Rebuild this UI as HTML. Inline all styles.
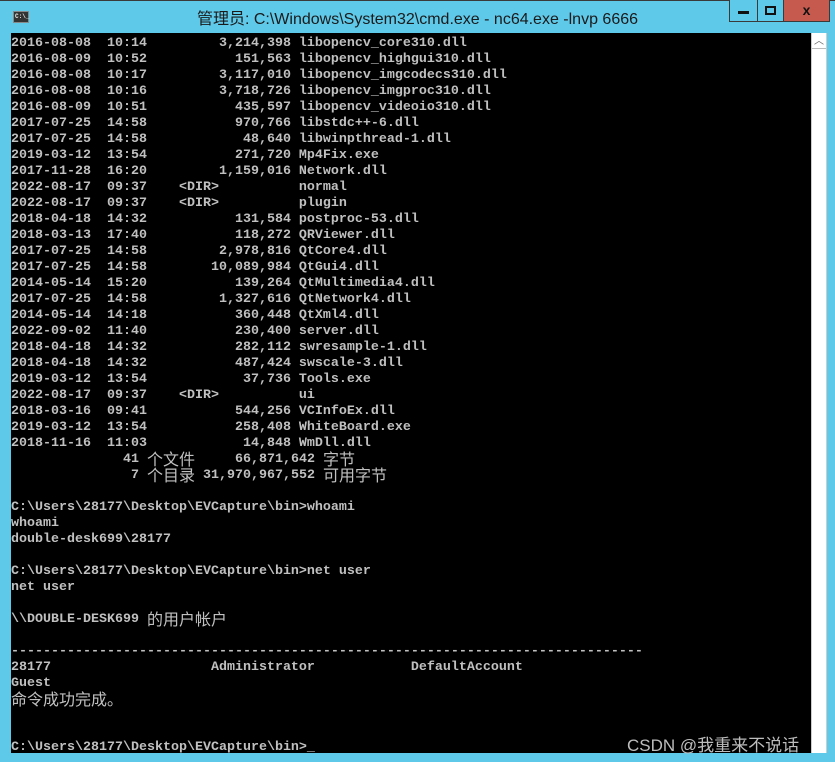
<!DOCTYPE html>
<html><head><meta charset="utf-8"><style>
*{margin:0;padding:0;box-sizing:border-box}
body{width:835px;height:762px;background:#5fc9ea;position:relative;overflow:hidden;font-family:"Liberation Sans","Noto Sans CJK SC",sans-serif}
.top{position:absolute;left:0;top:0;width:835px;height:1px;background:#3a3a3a}
.title{position:absolute;left:0;right:0;top:5px;text-align:center;font-size:16px;color:#1a1a1a}
.icon{position:absolute;left:13px;top:11px;width:16px;height:12px;background:#333;border:1px solid #888;}
.icon:before{content:"C:\\_";position:absolute;left:1px;top:1px;font:bold 6px "Liberation Mono",monospace;color:#eee;line-height:7px}
.btn{position:absolute;top:0;height:22px;border:1px solid #3a3a3a;border-top:none}
.con{position:absolute;left:11px;top:33px;width:800px;height:720px;background:#000;overflow:hidden;padding-top:1px}
.l{height:16px;display:flex;align-items:center;white-space:pre;font-family:"Liberation Mono",monospace;font-size:13.33px;font-weight:bold;color:#c0c0c0;padding-top:2px}
.c{font-family:"Noto Sans CJK SC",sans-serif;font-size:16px;font-weight:normal;line-height:16px;height:16px;margin-top:-2px}
.sb{position:absolute;left:811px;top:33px;width:16px;height:720px;background:#fff;border-left:1px solid #ccc;border-right:1px solid #ccc}
.wm{position:absolute;left:627px;top:731px;font-size:17px;color:#bdbdbd}
</style></head><body>
<div class="top"></div>
<div class="icon"></div>
<div class="title">管理员: C:\Windows\System32\cmd.exe - nc64.exe  -lnvp 6666</div>
<div class="btn" style="left:729px;width:29px;background:#5fc9ea"><div style="position:absolute;left:8px;top:11px;width:11px;height:3px;background:#111"></div></div>
<div class="btn" style="left:757px;width:27px;background:#5fc9ea"><div style="position:absolute;left:7px;top:6px;width:11px;height:9px;border:2px solid #111"></div></div>
<div class="btn" style="left:783px;width:47px;background:#c75a4f;color:#111;font:bold 14px 'Liberation Sans',sans-serif;text-align:center;line-height:20px">x</div>
<div class="con">
<div class="l">2016-08-08  10:14         3,214,398 libopencv_core310.dll</div>
<div class="l">2016-08-09  10:52           151,563 libopencv_highgui310.dll</div>
<div class="l">2016-08-08  10:17         3,117,010 libopencv_imgcodecs310.dll</div>
<div class="l">2016-08-08  10:16         3,718,726 libopencv_imgproc310.dll</div>
<div class="l">2016-08-09  10:51           435,597 libopencv_videoio310.dll</div>
<div class="l">2017-07-25  14:58           970,766 libstdc++-6.dll</div>
<div class="l">2017-07-25  14:58            48,640 libwinpthread-1.dll</div>
<div class="l">2019-03-12  13:54           271,720 Mp4Fix.exe</div>
<div class="l">2017-11-28  16:20         1,159,016 Network.dll</div>
<div class="l">2022-08-17  09:37    &lt;DIR&gt;          normal</div>
<div class="l">2022-08-17  09:37    &lt;DIR&gt;          plugin</div>
<div class="l">2018-04-18  14:32           131,584 postproc-53.dll</div>
<div class="l">2018-03-13  17:40           118,272 QRViewer.dll</div>
<div class="l">2017-07-25  14:58         2,978,816 QtCore4.dll</div>
<div class="l">2017-07-25  14:58        10,089,984 QtGui4.dll</div>
<div class="l">2014-05-14  15:20           139,264 QtMultimedia4.dll</div>
<div class="l">2017-07-25  14:58         1,327,616 QtNetwork4.dll</div>
<div class="l">2014-05-14  14:18           360,448 QtXml4.dll</div>
<div class="l">2022-09-02  11:40           230,400 server.dll</div>
<div class="l">2018-04-18  14:32           282,112 swresample-1.dll</div>
<div class="l">2018-04-18  14:32           487,424 swscale-3.dll</div>
<div class="l">2019-03-12  13:54            37,736 Tools.exe</div>
<div class="l">2022-08-17  09:37    &lt;DIR&gt;          ui</div>
<div class="l">2018-03-16  09:41           544,256 VCInfoEx.dll</div>
<div class="l">2019-03-12  13:54           258,408 WhiteBoard.exe</div>
<div class="l">2018-11-16  11:03            14,848 WmDll.dll</div>
<div class="l">              41 <span class="c">个文件</span>     66,871,642 <span class="c">字节</span></div>
<div class="l">               7 <span class="c">个目录</span> 31,970,967,552 <span class="c">可用字节</span></div>
<div class="l"> </div>
<div class="l">C:\Users\28177\Desktop\EVCapture\bin&gt;whoami</div>
<div class="l">whoami</div>
<div class="l">double-desk699\28177</div>
<div class="l"> </div>
<div class="l">C:\Users\28177\Desktop\EVCapture\bin&gt;net user</div>
<div class="l">net user</div>
<div class="l"> </div>
<div class="l">\\DOUBLE-DESK699 <span class="c">的用户帐户</span></div>
<div class="l"> </div>
<div class="l">-------------------------------------------------------------------------------</div>
<div class="l">28177                    Administrator            DefaultAccount</div>
<div class="l">Guest</div>
<div class="l"><span class="c">命令成功完成。</span></div>
<div class="l"> </div>
<div class="l"> </div>
<div class="l">C:\Users\28177\Desktop\EVCapture\bin&gt;_</div>
</div>
<div class="sb">
<div style="position:absolute;left:0;top:0;width:14px;height:16px;border-bottom:1px solid #bbb;color:#666;font-size:10px;text-align:center;line-height:18px">︿</div>
</div>
<div class="wm">CSDN @我重来不说话</div>
</body></html>
